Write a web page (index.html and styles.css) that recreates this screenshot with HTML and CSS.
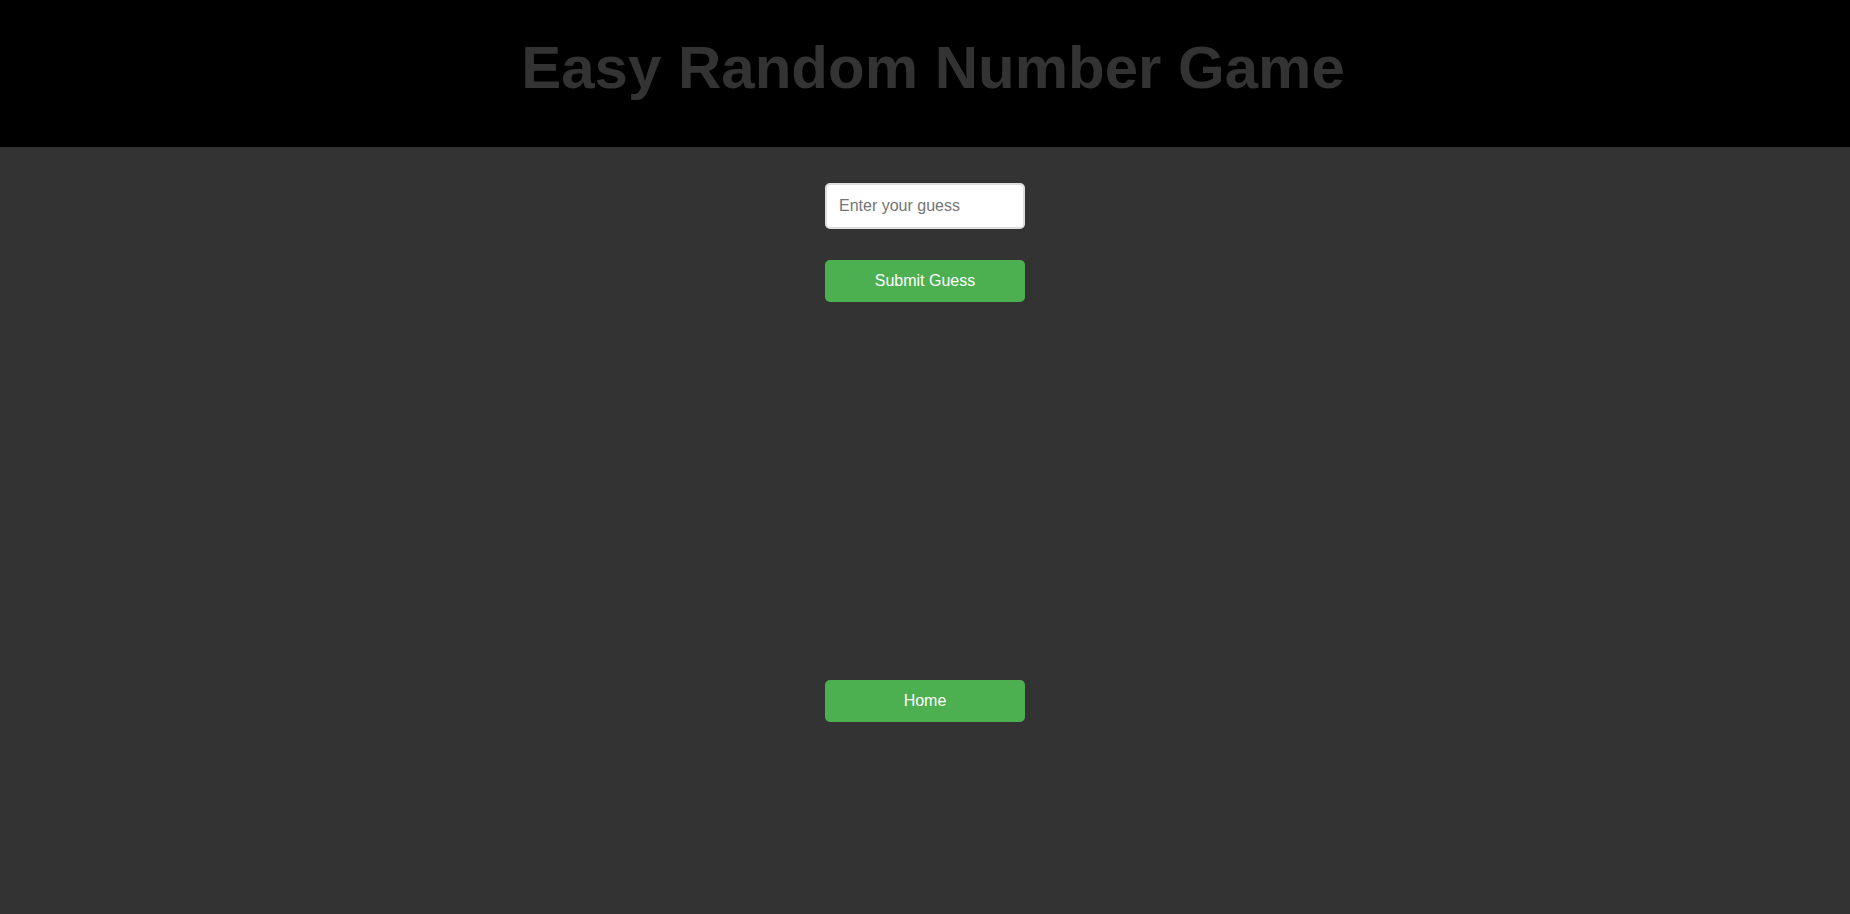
FILE: index.html
```html
<!DOCTYPE html>
<html lang="en">
<head>
<meta charset="utf-8">
<title>Easy Random Number Game</title>
<link rel="stylesheet" href="styles.css">
</head>
<body>
<header class="site-header">
  <h1 class="title">Easy Random Number Game</h1>
</header>
<main class="game">
  <input class="guess-input" type="number" placeholder="Enter your guess">
  <button class="btn btn-submit" type="button">Submit Guess</button>
  <div class="result"></div>
  <button class="btn btn-home" type="button">Home</button>
</main>
</body>
</html>
```
FILE: styles.css
```css
html, body {
  margin: 0;
  padding: 0;
  background: #333333;
  font-family: "Liberation Sans", Arial, sans-serif;
  height: 100%;
}
.site-header {
  background: #000000;
  height: 147px;
  box-sizing: border-box;
  padding-top: 33px;
  padding-left: 16px;
  text-align: center;
}
.title {
  margin: 0;
  font-size: 60px;
  line-height: 69px;
  font-weight: bold;
  color: #333333;
}
.game {
  display: flex;
  flex-direction: column;
  align-items: center;
  padding-top: 36px;
}
.guess-input {
  width: 200px;
  height: 46px;
  box-sizing: border-box;
  padding: 0 12px;
  border: 2px solid #dddddd;
  border-radius: 5px;
  background: #ffffff;
  font-family: "Liberation Sans", Arial, sans-serif;
  font-size: 16px;
  color: #333;
  outline: none;
}
.guess-input::placeholder {
  color: #757575;
}
.btn {
  width: 200px;
  height: 42px;
  box-sizing: border-box;
  border: none;
  border-radius: 5px;
  background: #4CAF50;
  color: #ffffff;
  font-family: "Liberation Sans", Arial, sans-serif;
  font-size: 16px;
  cursor: pointer;
}
.btn-submit {
  margin-top: 31px;
}
.result {
  height: 378px;
}
```
